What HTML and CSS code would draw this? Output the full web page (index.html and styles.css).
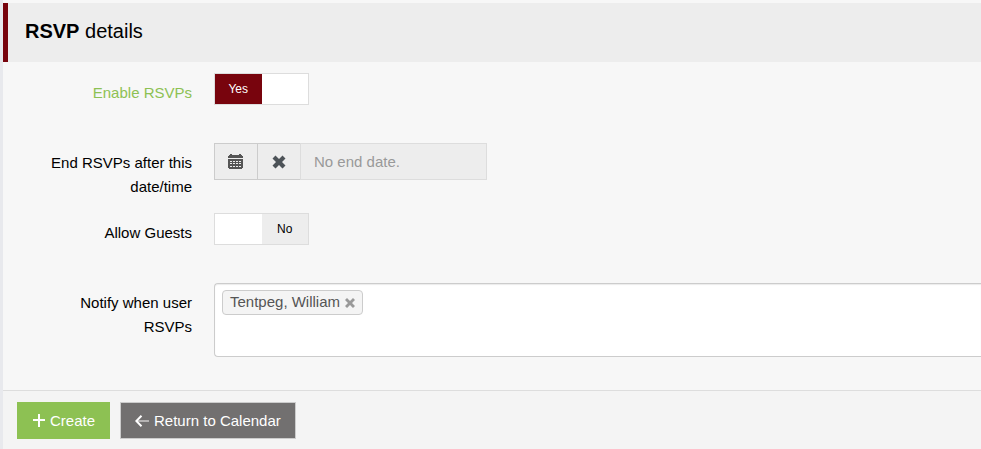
FILE: index.html
```html
<!DOCTYPE html>
<html lang="en">
<head>
  <meta charset="UTF-8">
  <meta name="viewport" content="width=device-width, initial-scale=1.0">
  <title>RSVP details</title>
  <link rel="stylesheet" href="styles.css">
</head>
<body>
  <form class="panel">
    <h2 class="panel-heading"><strong>RSVP</strong> details</h2>

    <div class="panel-body">
      <label class="control-label success" for="enableRsvps">Enable RSVPs</label>
      <div class="control">
        <label class="switch">
          <input type="checkbox" id="enableRsvps" name="enableRsvps" checked>
          <span class="switch-on">Yes</span>
          <span class="switch-off">No</span>
        </label>
      </div>

      <label class="control-label" for="endDate">End RSVPs after this date/time</label>
      <div class="control">
        <div class="input-group">
          <button type="button" class="addon" aria-label="Pick date">
            <svg width="16" height="15" viewBox="0 0 16 15" shape-rendering="crispEdges">
              <path fill="#555" fill-rule="evenodd" d="M2 0h2v1h7V0h2v1h1v1h1v2H0V2h1V1h1zM0 5h15v9h-1v1H1v-1H0zM2 7v1h2V7zM5 7v1h2V7zM8 7v1h2V7zM11 7v1h2V7zM2 9v1h2V9zM5 9v1h2V9zM8 9v1h2V9zM11 9v1h2V9zM2 12v1h2v-1zM5 12v1h2v-1zM8 12v1h2v-1zM11 12v1h2v-1z"/>
            </svg>
          </button>
          <button type="button" class="addon" aria-label="Clear date">
            <svg width="14" height="14" viewBox="0 0 14 14">
              <path fill="#4d5358" d="M3.500 .5L7 4 10.500 .5 13.500 3.500 10 7l3.500 3.500-3 3L7 10l-3.500 3.500-3-3L4 7 .5 3.500z"/>
            </svg>
          </button>
          <input type="text" id="endDate" name="endDate" placeholder="No end date." disabled>
        </div>
      </div>

      <label class="control-label" for="allowGuests">Allow Guests</label>
      <div class="control">
        <label class="switch">
          <input type="checkbox" id="allowGuests" name="allowGuests">
          <span class="switch-on">Yes</span>
          <span class="switch-off">No</span>
        </label>
      </div>

      <label class="control-label" for="notify">Notify when user RSVPs</label>
      <div class="tag-box">
        <span class="tag">Tentpeg, William
          <button type="button" class="tag-remove" aria-label="Remove">
            <svg width="10" height="10" viewBox="0 0 10 10">
              <path fill="#999" d="M0 2L2 0l3 3 3-3 2 2-3 3 3 3-2 2-3-3-3 3-2-2 3-3z"/>
            </svg>
          </button>
        </span>
        <input type="text" id="notify" name="notify">
      </div>
    </div>

    <div class="panel-footer">
      <button type="submit" class="btn btn-create">
        <svg width="13" height="13" viewBox="0 0 13 13">
          <path stroke="#fff" stroke-width="2" d="M7 0v13M1 6h12"/>
        </svg>
        Create
      </button>
      <a href="#" class="btn btn-return">
        <svg width="14" height="12" viewBox="0 0 14 12" fill="none">
          <path stroke="#b5b3b3" stroke-width="2" d="M2 6h12"/>
          <path stroke="#fff" stroke-width="2" d="M6.500 .7L1.300 6l5.200 5.300"/>
        </svg>
        Return to Calendar
      </a>
    </div>
  </form>
</body>
</html>
```
FILE: styles.css
```css
* {
  box-sizing: border-box;
}

body {
  margin: 0;
  font-family: "Liberation Sans", Arial, sans-serif;
  font-size: 15px;
  color: #000;
  background-color: #e8e9ed;
}

.panel {
  display: flex;
  flex-direction: column;
  min-height: 100vh;
  margin-left: 3px;
  padding-top: 3px;
  background-color: #f7f7f7;
}

.panel-heading {
  margin: 0;
  padding: 16px 17px 19px;
  border-left: 5px solid #78040d;
  background-color: #ededed;
  font-size: 20px;
  font-weight: normal;
  line-height: 24px;
}

.panel-body {
  display: grid;
  grid-template-columns: 159px 1fr;
  grid-auto-rows: minmax(56px, auto);
  gap: 14px 22px;
  padding: 11px 0 33px 30px;
}

.control-label {
  padding-top: 8px;
  line-height: 24px;
  text-align: right;
}

.control-label.success {
  color: #8dc153;
}

/* Yes / No switch */
.switch {
  display: flex;
  width: 95px;
  height: 32px;
  border: 1px solid #ddd;
  background-color: #fff;
  font-size: 12px;
  line-height: 30px;
  text-align: center;
  cursor: pointer;
}

.switch input {
  position: absolute;
  opacity: 0;
}

.switch span {
  width: 50%;
  visibility: hidden;
}

.switch-on {
  color: #fff;
  background-color: #78040d;
}

.switch-off {
  background-color: #ededed;
}

.switch input:checked ~ .switch-on,
.switch input:not(:checked) ~ .switch-off {
  visibility: visible;
}

/* Date field */
.input-group {
  display: flex;
  width: 273px;
  height: 37px;
}

.addon {
  display: flex;
  align-items: center;
  justify-content: center;
  width: 43px;
  padding: 0;
  border: 1px solid #ccc;
  border-right: none;
  background-color: #ededed;
  cursor: pointer;
}

.input-group input {
  flex: 1;
  min-width: 0;
  padding: 0 13px;
  border: 1px solid #ddd;
  background-color: #ededed;
  font: inherit;
}

.input-group input::placeholder {
  color: #999;
}

/* User list */
.tag-box {
  display: flex;
  align-items: flex-start;
  height: 74px;
  padding: 6px 7px;
  border: 1px solid #ccc;
  border-right: none;
  border-radius: 4px 0 0 4px;
  background-color: #fff;
  box-shadow: inset 0 1px 1px rgba(0, 0, 0, 0.08);
}

.tag {
  display: flex;
  align-items: center;
  gap: 5px;
  height: 25px;
  padding: 0 7px 2px;
  border: 1px solid #ccc;
  border-radius: 4px;
  background-color: #f4f4f4;
  color: #555;
}

.tag-remove {
  display: flex;
  padding: 3px 0 0;
  border: none;
  background: none;
  cursor: pointer;
}

.tag-box input {
  flex: 1;
  height: 25px;
  border: none;
  outline: none;
  background: none;
  font: inherit;
}

.panel-footer {
  display: flex;
  flex: 1;
  align-items: flex-start;
  gap: 10px;
  padding: 11px 14px 10px;
  border-top: 1px solid #ddd;
  background-color: #f4f4f4;
}

.btn {
  display: flex;
  align-items: center;
  gap: 5px;
  height: 37px;
  padding: 0 14px;
  border: 1px solid #ccc;
  color: #fff;
  font: inherit;
  text-decoration: none;
  cursor: pointer;
}

.btn-create {
  border-color: #8dc153;
  background-color: #8dc153;
}

.btn-return {
  background-color: #727070;
}
```
